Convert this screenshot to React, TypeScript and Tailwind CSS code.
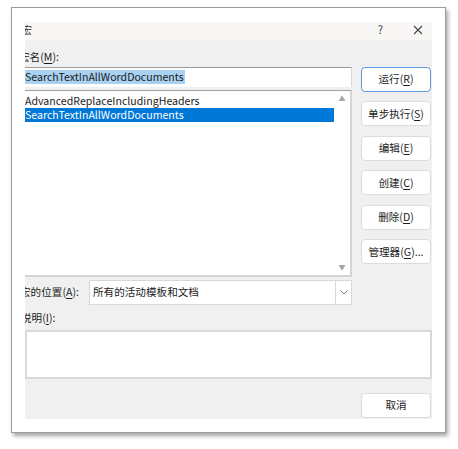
const font = { fontFamily: '"Noto Sans CJK SC", "Noto Sans", sans-serif' }

function Mn({ c }: { c: string }) {
  return (
    <>
      (<span className="underline underline-offset-[1.5px]">{c}</span>)
    </>
  )
}

function Btn({ children, primary }: { children: React.ReactNode; primary?: boolean }) {
  return (
    <div
      className={
        "h-[25px] w-[70px] rounded-[4px] bg-white flex items-center justify-center text-[10.6px] text-[#1b1b1b] " +
        (primary ? "border border-[#5e9ee0]" : "border border-[#dcdcdc]")
      }
    >
      {children}
    </div>
  )
}

export default function App() {
  return (
    <div className="w-[458px] h-[449px] bg-white pt-[7px] pl-[11px]" style={font}>
      <div className="w-[435px] h-[426px] border border-[#9c9c9c] bg-white pt-[14px] pl-[13px] shadow-[2px_3px_4px_rgba(0,0,0,0.35)]">
        <div className="w-[407px] h-[397px] bg-[#f0f0f0] overflow-hidden flex flex-col text-[10.6px] text-[#1b1b1b] leading-none">
          {/* title bar */}
          <div className="h-[18px] bg-[#f8f7f5] flex items-center pb-[2px]">
            <span className="ml-[-3px] text-[10px] text-[#333]">宏</span>
            <span className="ml-auto mr-[30px] text-[11px] text-[#444]">?</span>
            <svg className="mr-[9px]" width="10" height="10" viewBox="0 0 10 10">
              <path d="M1 1 L9 9 M9 1 L1 9" stroke="#444" strokeWidth="1.1" />
            </svg>
          </div>

          <div className="flex flex-1 mt-[10px]">
            <div className="w-[327px] flex flex-col">
              <div className="ml-[-6px] h-[15px] flex items-center">
                宏名<Mn c="M" />:
              </div>
              <div className="h-[20px] mt-[2px] bg-white border-t border-t-[#9a9a9a] border-r border-r-[#d8d8d8] flex items-center">
                <span className="bg-[#a9d1f2] px-[1px] ml-[-1px] h-[14px] flex items-center">SearchTextInAllWordDocuments</span>
              </div>
              <div className="mt-[3px] h-[187px] bg-white border-t border-t-[#a0a0a0] border-r-2 border-r-[#d4d4d4] border-b-2 border-b-[#d4d4d4] flex">
                <div className="flex-1 flex flex-col pt-[3px]">
                  <div className="h-[14px] flex items-center">AdvancedReplaceIncludingHeaders</div>
                  <div className="h-[14px] flex items-center bg-[#0078d7] text-white">SearchTextInAllWordDocuments</div>
                </div>
                <div className="w-[16px] flex flex-col items-center justify-between py-[4px] text-[7px] text-[#a6a6a6]">
                  <span>▲</span>
                  <span>▼</span>
                </div>
              </div>
              <div className="mt-[3px] flex items-center h-[25px]">
                <span className="ml-[-5px] w-[69px]">
                  宏的位置<Mn c="A" />:
                </span>
                <div className="flex-1 h-[25px] bg-white border border-[#d8d8d8] flex items-center">
                  <span className="ml-[3px]">所有的活动模板和文档</span>
                  <div className="ml-auto h-full w-[16px] border-l border-[#d8d8d8] flex items-center justify-center">
                    <svg width="8" height="5" viewBox="0 0 8 5">
                      <path d="M0.5 0.5 L4 4 L7.5 0.5" fill="none" stroke="#777" strokeWidth="1" />
                    </svg>
                  </div>
                </div>
              </div>
            </div>
            <div className="ml-auto mr-[1px] flex flex-col gap-[9.5px] pt-[17px]">
              <Btn primary>
                运行<Mn c="R" />
              </Btn>
              <Btn>
                单步执行<Mn c="S" />
              </Btn>
              <Btn>
                编辑<Mn c="E" />
              </Btn>
              <Btn>
                创建<Mn c="C" />
              </Btn>
              <Btn>
                删除<Mn c="D" />
              </Btn>
              <Btn>
                管理器<Mn c="G" />...
              </Btn>
            </div>
          </div>

          <div className="ml-[-4px] mt-[7px] h-[14px] flex items-center">
            说明<Mn c="I" />:
          </div>
          <div className="mt-[4px] h-[50px] bg-white border-2 border-[#d8d8d8]" />
          <div className="flex justify-end mt-[14px] mb-[1px] mr-[1px]">
            <Btn>取消</Btn>
          </div>
        </div>
      </div>
    </div>
  )
}
